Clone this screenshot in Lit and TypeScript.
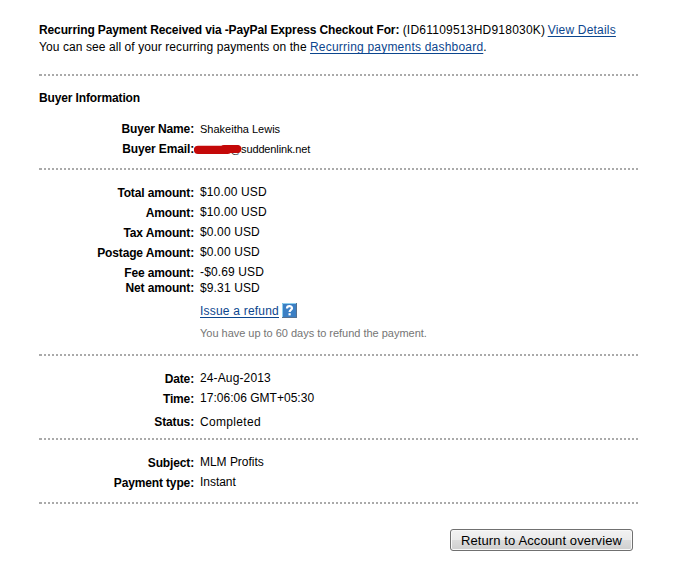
import { LitElement, html, css } from "lit";
import { customElement, property } from "lit/decorators.js";
import { classMap } from "lit/directives/class-map.js";

interface Row {
  label: string;
  value: string;
  kind?: string;
}

@customElement("detail-row")
class DetailRow extends LitElement {
  @property() label = "";
  static styles = css`
    :host {
      display: grid;
      grid-template-columns: 155px 1fr;
      column-gap: 6px;
      height: 16px;
      line-height: 16px;
      white-space: nowrap;
    }
    .label {
      font-weight: bold;
      text-align: right;
      padding-top: var(--label-drop, 1px);
      letter-spacing: -0.14px;
    }
    .value {
      letter-spacing: var(--value-spacing, 0.13px);
    }
  `;
  render() {
    return html`<span class="label">${this.label}</span><span class="value"><slot></slot></span>`;
  }
}

@customElement("app-root")
class AppRoot extends LitElement {
  static styles = css`
    :host {
      display: flow-root;
      box-sizing: border-box;
      height: 565px;
      padding: 22px 36px 0 39px;
      background: #fff;
      color: #000;
      font: 12px/16px "Liberation Sans", Arial, sans-serif;
      overflow: hidden;
    }
    p, h2 { margin: 0; font-size: 12px; white-space: nowrap; }
    .second { margin-top: 1px; }
    a { color: #0c468e; text-decoration: underline; text-underline-offset: 2px; text-decoration-thickness: 1px; }
    .title { letter-spacing: -0.12px; }
    .id { letter-spacing: 0.23px; }
    .view { letter-spacing: 0.2px; margin-left: -1px; }
    .see { letter-spacing: 0.08px; }
    .dash { letter-spacing: 0.21px; }
    .rule {
      height: 2px;
      background: repeating-linear-gradient(90deg, #aaa 0 2px, #fff 2px 4px) 1px 0 no-repeat, linear-gradient(#aaa, #aaa) 0 0 / 1px 2px no-repeat;
      margin-right: -1px;
    }
    .r1 { margin-top: 19px; }
    h2 { margin-top: 14px; letter-spacing: -0.14px; }
    .buyer { margin-top: 15px; }
    .rows { display: flex; flex-direction: column; gap: 4px; }
    .buyer detail-row { --label-drop: 0px; --value-spacing: 0; }
    .small { font-size: 11px; }
    .email { display: flex; align-items: center; margin-left: -6px; }
    .email .at { margin-left: -12px; letter-spacing: -0.13px; }
    .scribble { width: 48px; height: 11px; position: relative; z-index: 1; }
    .r2 { margin-top: 11px; }
    .amounts { margin-top: 14px; }
    .tight { margin-top: -4px; --label-drop: 0px; }
    .refund { margin: 7px 0 0 161px; display: flex; gap: 3px; letter-spacing: 0.21px; }
    .help { width: 15px; height: 15px; display: block; }
    .note { margin: 6px 0 0 161px; font-size: 11px; color: #757575; letter-spacing: -0.02px; }
    .r3 { margin-top: 13px; }
    .when { margin-top: 14px; }
    .time { --value-spacing: 0.02px; }
    .status { margin-top: 4px; --label-drop: 0px; --value-spacing: 0.33px; }
    .r4 { margin-top: 8px; }
    .about { margin-top: 14px; --value-spacing: -0.03px; }
    .r5 { margin-top: 12px; }
    .foot { display: flex; justify-content: flex-end; margin: 25px 5px 0 0; }
    button {
      box-sizing: border-box;
      width: 183px;
      height: 22px;
      padding: 1px 0 0;
      border: 1px solid #707070;
      border-radius: 3px;
      background: linear-gradient(#f2f2f2, #ebebeb 48%, #dcdcdc 50%, #cfcfcf);
      box-shadow: inset 0 0 0 1px #f8f8f8;
      color: #000;
      font: 13px/19px "Liberation Sans", Arial, sans-serif;
      letter-spacing: 0.11px;
      white-space: nowrap;
    }
  `;

  private amounts: Row[] = [
    { label: "Total amount:", value: "$10.00 USD" },
    { label: "Amount:", value: "$10.00 USD" },
    { label: "Tax Amount:", value: "$0.00 USD" },
    { label: "Postage Amount:", value: "$0.00 USD" },
    { label: "Fee amount:", value: "-$0.69 USD" },
    { label: "Net amount:", value: "$9.31 USD", kind: "tight" },
  ];
  private when: Row[] = [
    { label: "Date:", value: "24-Aug-2013" },
    { label: "Time:", value: "17:06:06 GMT+05:30", kind: "time" },
    { label: "Status:", value: "Completed", kind: "status" },
  ];
  private about: Row[] = [
    { label: "Subject:", value: "MLM Profits" },
    { label: "Payment type:", value: "Instant" },
  ];

  private rows(list: Row[]) {
    return list.map(
      (r) => html`<detail-row
        class=${classMap({ tight: r.kind === "tight", time: r.kind === "time", status: r.kind === "status" })}
        .label=${r.label}
      >${r.value}</detail-row>`
    );
  }

  render() {
    return html`
      <p><b class="title">Recurring Payment Received via -PayPal Express Checkout For:</b> <span class="id">(ID61109513HD918030K)</span> <a class="view">View Details</a></p>
      <p class="second"><span class="see">You can see all of your recurring payments on the</span> <a class="dash">Recurring payments dashboard</a>.</p>
      <div class="rule r1"></div>
      <h2>Buyer Information</h2>
      <div class="rows buyer">
        <detail-row label="Buyer Name:"><span class="small name">Shakeitha Lewis</span></detail-row>
        <detail-row label="Buyer Email:"><span class="small email"><svg class="scribble" viewBox="0 0 48 11"><path d="M4 5.8H34M30 5H43.3" fill="none" stroke="#c40808" stroke-width="8.2" stroke-linecap="round"/></svg><span class="at">@suddenlink.net</span></span></detail-row>
      </div>
      <div class="rule r2"></div>
      <div class="rows amounts">${this.rows(this.amounts)}</div>
      <div class="refund"><a>Issue a refund</a><svg class="help" viewBox="0 0 15 15"><rect width="15" height="15" fill="#3b7fc4"/><path d="M.5 15V.5H15" fill="none" stroke="#8fd0ee"/><path d="M14.5 0V14.5H0" fill="none" stroke="#56718f"/><path d="M5 5.4C5 2.5 10 2.5 10 5.2C10 7 7.6 6.8 7.6 9" fill="none" stroke="#fff" stroke-width="2.2"/><rect x="6.5" y="10.2" width="2.2" height="2.2" fill="#fff"/></svg></div>
      <p class="note">You have up to 60 days to refund the payment.</p>
      <div class="rule r3"></div>
      <div class="rows when">${this.rows(this.when)}</div>
      <div class="rule r4"></div>
      <div class="rows about">${this.rows(this.about)}</div>
      <div class="rule r5"></div>
      <div class="foot"><button>Return to Account overview</button></div>
    `;
  }
}
